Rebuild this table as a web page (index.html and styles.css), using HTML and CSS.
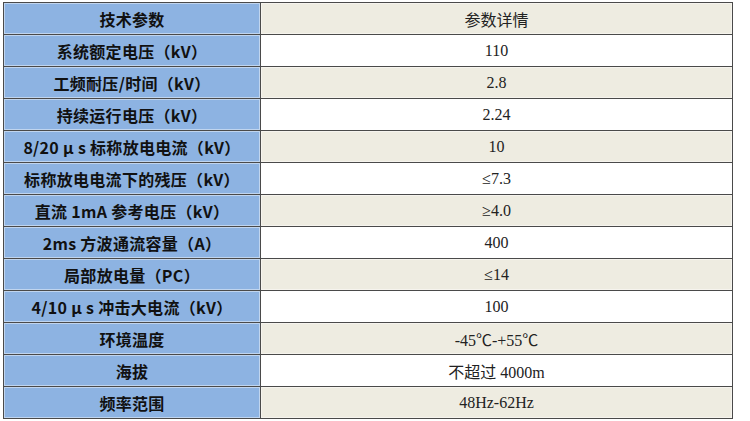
FILE: index.html
```html
<!DOCTYPE html>
<html lang="zh">
<head>
<meta charset="utf-8">
<title>技术参数</title>
<link rel="stylesheet" href="styles.css">
</head>
<body>
<table class="spec">
  <tr class="tan"><th>技术参数</th><td>参数详情</td></tr>
  <tr class="white"><th>系统额定电压（kV）</th><td>110</td></tr>
  <tr class="tan"><th>工频耐压/时间（kV）</th><td>2.8</td></tr>
  <tr class="white"><th>持续运行电压（kV）</th><td>2.24</td></tr>
  <tr class="tan"><th>8/20 μ s 标称放电电流（kV）</th><td>10</td></tr>
  <tr class="white"><th>标称放电电流下的残压（kV）</th><td>≤7.3</td></tr>
  <tr class="tan"><th>直流 1mA 参考电压（kV）</th><td>≥4.0</td></tr>
  <tr class="white"><th>2ms 方波通流容量（A）</th><td>400</td></tr>
  <tr class="tan"><th>局部放电量（PC）</th><td>≤14</td></tr>
  <tr class="white"><th>4/10 μ s 冲击大电流（kV）</th><td>100</td></tr>
  <tr class="tan"><th>环境温度</th><td>-45℃-+55℃</td></tr>
  <tr class="white"><th>海拔</th><td>不超过 4000m</td></tr>
  <tr class="tan"><th>频率范围</th><td>48Hz-62Hz</td></tr>
</table>
</body>
</html>
```

FILE: styles.css
```css
html, body {
  margin: 0;
  padding: 0;
  background: #ffffff;
}

body {
  padding: 2px 0 0 3px;
}

.spec {
  border-collapse: collapse;
  width: 730px;
  table-layout: fixed;
  border: 1px solid #3a3a3a;
}

.spec tr {
  height: 32px;
}

.spec th,
.spec td {
  border: 1px solid #4a4a4a;
  padding: 0;
  text-align: center;
  vertical-align: middle;
  box-shadow: inset 0 0 0 1px rgba(255, 255, 255, 0.45);
  color: #111;
}

.spec th {
  width: 256px;
  background: #8db3e2;
  font-family: "Noto Sans CJK SC", "Noto Sans", sans-serif;
  font-weight: 700;
  font-size: 16px;
  white-space: nowrap;
  letter-spacing: 0.3px;
}

.spec td {
  font-family: "Liberation Serif", "Noto Sans CJK SC", serif;
  font-size: 16px;
  font-weight: 400;
  color: #222;
}

.spec tr.tan td {
  background: #eeece1;
}

.spec tr.white td {
  background: #ffffff;
}
```
